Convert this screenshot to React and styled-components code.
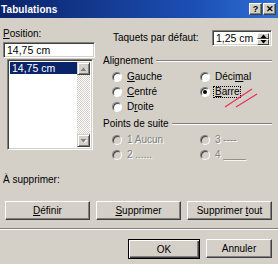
import React from "react";
import styled, { createGlobalStyle } from "styled-components";

const GlobalStyle = createGlobalStyle`
  html, body {
    margin: 0;
    padding: 0;
    background: #d4d0c8;
  }
  body {
    font-family: "Liberation Sans", Arial, sans-serif;
    font-size: 10px;
    color: #000;
  }
`;

const Window = styled.div`
  position: relative;
  width: 278px;
  height: 264px;
  background: #d4d0c8;
  display: flex;
  flex-direction: column;
  overflow: hidden;
`;

const TitleBar = styled.div`
  height: 18px;
  flex: none;
  display: flex;
  align-items: center;
  padding: 0 2px 0 1px;
  background: linear-gradient(to right, #0a246a 0%, #1c4fb4 70%, #2f6fd6 100%);
  color: #fff;
  font-weight: bold;
  font-size: 10px;
`;

const TitleText = styled.span`
  flex: 1;
  letter-spacing: 0.1px;
`;

const CaptionButton = styled.span`
  width: 11px;
  height: 10px;
  margin-left: ${({ gap }) => gap || 0}px;
  display: flex;
  align-items: center;
  justify-content: center;
  background: #d4d0c8;
  color: #000;
  font-size: 9px;
  font-weight: bold;
  line-height: 1;
  border: 1px solid;
  border-color: #fff #404040 #404040 #fff;
  box-shadow: inset -1px -1px #808080;
`;

const Body = styled.div`
  flex: 1;
  display: flex;
  flex-direction: column;
  padding: 0 6px 0 3px;
`;

const Top = styled.div`
  display: flex;
  height: 143px;
`;

const LeftCol = styled.div`
  width: 92px;
  display: flex;
  flex-direction: column;
  padding-top: 10px;
`;

const Label = styled.div`
  line-height: 12px;
  white-space: nowrap;
  margin-left: ${({ indent }) => indent || 0}px;
`;

const Key = styled.span`
  text-decoration: underline;
  text-underline-offset: 1px;
`;

const Sunken = styled.div`
  background: #fff;
  border: 1px solid;
  border-color: #808080 #fff #fff #808080;
  box-shadow: inset 1px 1px #404040, inset -1px -1px #d4d0c8;
`;

const TextBox = styled(Sunken)`
  margin-top: 2px;
  height: 16px;
  box-sizing: border-box;
  padding: 0 3px;
  display: flex;
  align-items: center;
  font-size: 10.5px;
`;

const ListBox = styled(Sunken)`
  margin: 1px 0 0 4px;
  width: 86px;
  height: 91px;
  box-sizing: border-box;
  padding: 2px;
  display: flex;
`;

const ListItems = styled.div`
  flex: 1;
`;

const ListItem = styled.div`
  height: 12px;
  line-height: 12px;
  padding-left: 2px;
  font-size: 10.5px;
  background: ${({ selected }) => (selected ? "#0a246a" : "transparent")};
  color: ${({ selected }) => (selected ? "#fff" : "#000")};
`;

const ScrollBar = styled.div`
  width: 13px;
  display: flex;
  flex-direction: column;
  justify-content: space-between;
  background-color: #fff;
  background-image: repeating-conic-gradient(#d4d0c8 0 25%, #fff 0 50%);
  background-size: 2px 2px;
`;

const ArrowButton = styled.div`
  width: 13px;
  height: 13px;
  box-sizing: border-box;
  background: #d4d0c8;
  border: 1px solid;
  border-color: #d4d0c8 #404040 #404040 #d4d0c8;
  box-shadow: inset 1px 1px #fff, inset -1px -1px #808080;
  display: flex;
  align-items: center;
  justify-content: center;
`;

const RightCol = styled.div`
  flex: 1;
  margin-left: 8px;
  display: flex;
  flex-direction: column;
`;

const DefaultRow = styled.div`
  display: flex;
  align-items: center;
  margin-top: 12px;
  height: 16px;
`;

const SpinBox = styled(Sunken)`
  margin-left: auto;
  width: 60px;
  height: 16px;
  box-sizing: border-box;
  display: flex;
  align-items: stretch;
  padding: 2px 2px 2px 3px;
  font-size: 10.5px;
`;

const SpinText = styled.span`
  flex: 1;
  display: flex;
  align-items: center;
`;

const SpinButtons = styled.div`
  width: 12px;
  display: flex;
  flex-direction: column;
`;

const SpinButton = styled.div`
  flex: 1;
  box-sizing: border-box;
  background: #d4d0c8;
  border: 1px solid;
  border-color: #fff #404040 #404040 #fff;
  display: flex;
  align-items: center;
  justify-content: center;
`;

const GroupHeading = styled.div`
  display: flex;
  align-items: center;
  line-height: 12px;
  margin-top: ${({ top }) => top}px;
  white-space: nowrap;
  &::after {
    content: "";
    flex: 1;
    margin-left: 3px;
    height: 0;
    border-top: 1px solid #808080;
    border-bottom: 1px solid #fff;
  }
`;

const RadioGrid = styled.div`
  display: grid;
  grid-template-columns: 88px 1fr;
  grid-auto-rows: 15px;
  margin: 2px 0 0 9px;
`;

const RadioRow = styled.div`
  display: flex;
  align-items: center;
  color: ${({ disabled }) => (disabled ? "#808080" : "#000")};
  text-shadow: ${({ disabled }) => (disabled ? "1px 1px #fff" : "none")};
  white-space: nowrap;
`;

const Circle = styled.span`
  width: 10px;
  height: 10px;
  box-sizing: border-box;
  flex: none;
  border-radius: 50%;
  border: 1px solid;
  border-color: #808080 #fff #fff #808080;
  box-shadow: inset 1px 1px #404040;
  background: ${({ disabled }) => (disabled ? "#d4d0c8" : "#fff")};
  display: flex;
  align-items: center;
  justify-content: center;
  margin-right: 3px;
  &::after {
    content: "";
    display: ${({ checked }) => (checked ? "block" : "none")};
    width: 4px;
    height: 4px;
    border-radius: 50%;
    background: #000;
  }
`;

const Caption = styled.span`
  padding: 0 1px;
  border: 1px ${({ focused }) => (focused ? "dotted #000" : "solid transparent")};
  line-height: 10px;
`;

const RemoveLabel = styled(Label)`
  margin-top: 13px;
`;

const ButtonRow = styled.div`
  display: flex;
  gap: 6px;
  margin: ${({ top }) => top}px 0 0 ${({ left }) => left || 0}px;
  justify-content: ${({ end }) => (end ? "flex-end" : "flex-start")};
`;

const Button = styled.div`
  width: ${({ width }) => width}px;
  height: ${({ primary }) => (primary ? 20 : 19)}px;
  box-sizing: border-box;
  display: flex;
  align-items: center;
  justify-content: center;
  background: #d4d0c8;
  border: 1px solid;
  border-color: ${({ primary }) =>
    primary ? "#000" : "#fff #404040 #404040 #fff"};
  box-shadow: ${({ primary }) =>
    primary
      ? "inset 1px 1px #fff, inset -1px -1px #404040, inset -2px -2px #808080"
      : "inset -1px -1px #808080"};
  font-size: 10px;
  white-space: pre;
`;

const Separator = styled.div`
  margin-top: 8px;
  height: 0;
  border-top: 1px solid #808080;
  border-bottom: 1px solid #fff;
  margin-left: -3px;
  margin-right: -6px;
`;

const Annotation = styled.svg`
  position: absolute;
  left: 222px;
  top: 86px;
  pointer-events: none;
`;

const Arrow = ({ up, color = "#000", shadow }) => (
  <svg width="7" height="4" viewBox="0 0 7 4">
    {shadow && (
      <polygon
        points={up ? "1.5,4.5 4.5,1.5 7.5,4.5" : "1.5,1 7.5,1 4.5,4"}
        fill="#fff"
      />
    )}
    <polygon points={up ? "0.5,4 3.5,0.5 6.5,4" : "0.5,0 6.5,0 3.5,3.5"} fill={color} />
  </svg>
);

const Radio = ({ checked, disabled, focused, children }) => (
  <RadioRow disabled={disabled}>
    <Circle checked={checked} disabled={disabled} />
    <Caption focused={focused}>{children}</Caption>
  </RadioRow>
);

export default function App() {
  return (
    <>
      <GlobalStyle />
      <Window>
        <TitleBar>
          <TitleText>Tabulations</TitleText>
          <CaptionButton>?</CaptionButton>
          <CaptionButton gap={1}>✕</CaptionButton>
        </TitleBar>
        <Body>
          <Top>
            <LeftCol>
              <Label>
                <Key>P</Key>osition:
              </Label>
              <TextBox>14,75 cm</TextBox>
              <ListBox>
                <ListItems>
                  <ListItem selected>14,75 cm</ListItem>
                </ListItems>
                <ScrollBar>
                  <ArrowButton>
                    <Arrow up color="#808080" shadow />
                  </ArrowButton>
                  <ArrowButton>
                    <Arrow color="#808080" shadow />
                  </ArrowButton>
                </ScrollBar>
              </ListBox>
            </LeftCol>
            <RightCol>
              <DefaultRow>
                <Label indent={10}>Taquets par défaut:</Label>
                <SpinBox>
                  <SpinText>1,25 cm</SpinText>
                  <SpinButtons>
                    <SpinButton>
                      <Arrow up />
                    </SpinButton>
                    <SpinButton>
                      <Arrow />
                    </SpinButton>
                  </SpinButtons>
                </SpinBox>
              </DefaultRow>
              <GroupHeading top={9}>Alignement</GroupHeading>
              <RadioGrid>
                <Radio>
                  <Key>G</Key>auche
                </Radio>
                <Radio>
                  Déci<Key>m</Key>al
                </Radio>
                <Radio>
                  <Key>C</Key>entré
                </Radio>
                <Radio checked focused>
                  <Key>B</Key>arre
                </Radio>
                <Radio>
                  D<Key>r</Key>oite
                </Radio>
              </RadioGrid>
              <GroupHeading top={4}>Points de suite</GroupHeading>
              <RadioGrid>
                <Radio disabled>1 Aucun</Radio>
                <Radio disabled>3 ----</Radio>
                <Radio disabled>2 ......</Radio>
                <Radio disabled>4 ____</Radio>
              </RadioGrid>
            </RightCol>
          </Top>
          <RemoveLabel>À supprimer:</RemoveLabel>
          <ButtonRow top={15} left={2}>
            <Button width={85}>
              <span>
                <Key>D</Key>éfinir
              </span>
            </Button>
            <Button width={85}>
              <span>
                <Key>S</Key>upprimer
              </span>
            </Button>
            <Button width={85}>
              <span>
                Supprimer <Key>t</Key>out
              </span>
            </Button>
          </ButtonRow>
          <Separator />
          <ButtonRow top={9} end>
            <Button width={72} primary>
              OK
            </Button>
            <Button width={66}>Annuler</Button>
          </ButtonRow>
        </Body>
        <Annotation width="40" height="26" viewBox="0 0 40 26">
          <line x1="3" y1="21" x2="30" y2="3" stroke="#e8345c" strokeWidth="1.3" />
          <line x1="14" y1="21" x2="35" y2="8" stroke="#e8345c" strokeWidth="1.3" />
        </Annotation>
      </Window>
    </>
  );
}
